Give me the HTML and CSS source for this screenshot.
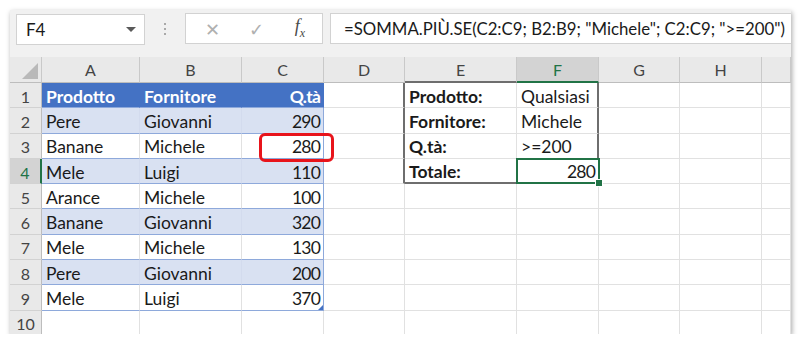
FILE: index.html
```html
<!DOCTYPE html>
<html lang="it">
<head>
    <meta charset="UTF-8">
    <meta name="viewport" content="width=device-width, initial-scale=1.0">
    <title>SOMMA.PIÙ.SE</title>
    <link rel="stylesheet" href="styles.css">
</head>
<body>
    <div class="frame">
        <div class="bar">
            <div class="namebox">
                <span>F4</span>
                <span class="caret"></span>
            </div>
            <div class="dots"><i></i><i></i><i></i></div>
            <div class="fxbox">
                <span class="btn x">&#x2715;</span>
                <span class="btn ok">&#x2713;</span>
                <span class="btn fx">f<sub>x</sub></span>
            </div>
            <div class="formula">=SOMMA.PIÙ.SE(C2:C9; B2:B9; "Michele"; C2:C9; "&gt;=200")</div>
        </div>

        <div class="sheet">
            <div class="row head">
                <div class="hc corner">
                    <svg width="16" height="16" viewBox="0 0 16 16"><polygon points="16,0 16,16 0,16" fill="#b9b9b9"/></svg>
                </div>
                <div class="hc">A</div>
                <div class="hc">B</div>
                <div class="hc">C</div>
                <div class="hc">D</div>
                <div class="hc box-t">E</div>
                <div class="hc on">F</div>
                <div class="hc">G</div>
                <div class="hc">H</div>
                <div class="hc"></div>
            </div>

            <div class="row">
                <div class="rh">1</div>
                <div class="c th">Prodotto</div>
                <div class="c th">Fornitore</div>
                <div class="c th num">Q.tà</div>
                <div class="c box-l"></div>
                <div class="c lbl">Prodotto:</div>
                <div class="c box-r">Qualsiasi</div>
                <div class="c"></div>
                <div class="c"></div>
                <div class="c"></div>
            </div>
            <div class="row">
                <div class="rh">2</div>
                <div class="c t band">Pere</div>
                <div class="c t band">Giovanni</div>
                <div class="c t band end num">290</div>
                <div class="c box-l"></div>
                <div class="c lbl">Fornitore:</div>
                <div class="c box-r">Michele</div>
                <div class="c"></div>
                <div class="c"></div>
                <div class="c"></div>
            </div>
            <div class="row">
                <div class="rh">3</div>
                <div class="c t">Banane</div>
                <div class="c t">Michele</div>
                <div class="c t end num hit">280</div>
                <div class="c box-l"></div>
                <div class="c lbl">Q.tà:</div>
                <div class="c box-r">&gt;=200</div>
                <div class="c"></div>
                <div class="c"></div>
                <div class="c"></div>
            </div>
            <div class="row">
                <div class="rh on">4</div>
                <div class="c t band">Mele</div>
                <div class="c t band">Luigi</div>
                <div class="c t band end num">110</div>
                <div class="c box-l"></div>
                <div class="c lbl box-b">Totale:</div>
                <div class="c num box-b sel">280</div>
                <div class="c"></div>
                <div class="c"></div>
                <div class="c"></div>
            </div>
            <div class="row">
                <div class="rh">5</div>
                <div class="c t">Arance</div>
                <div class="c t">Michele</div>
                <div class="c t end num">100</div>
                <div class="c"></div>
                <div class="c"></div>
                <div class="c"></div>
                <div class="c"></div>
                <div class="c"></div>
                <div class="c"></div>
            </div>
            <div class="row">
                <div class="rh">6</div>
                <div class="c t band">Banane</div>
                <div class="c t band">Giovanni</div>
                <div class="c t band end num">320</div>
                <div class="c"></div>
                <div class="c"></div>
                <div class="c"></div>
                <div class="c"></div>
                <div class="c"></div>
                <div class="c"></div>
            </div>
            <div class="row">
                <div class="rh">7</div>
                <div class="c t">Mele</div>
                <div class="c t">Michele</div>
                <div class="c t end num">130</div>
                <div class="c"></div>
                <div class="c"></div>
                <div class="c"></div>
                <div class="c"></div>
                <div class="c"></div>
                <div class="c"></div>
            </div>
            <div class="row">
                <div class="rh">8</div>
                <div class="c t band">Pere</div>
                <div class="c t band">Giovanni</div>
                <div class="c t band end num">200</div>
                <div class="c"></div>
                <div class="c"></div>
                <div class="c"></div>
                <div class="c"></div>
                <div class="c"></div>
                <div class="c"></div>
            </div>
            <div class="row">
                <div class="rh">9</div>
                <div class="c t">Mele</div>
                <div class="c t">Luigi</div>
                <div class="c t end num resize">370</div>
                <div class="c"></div>
                <div class="c"></div>
                <div class="c"></div>
                <div class="c"></div>
                <div class="c"></div>
                <div class="c"></div>
            </div>
            <div class="row">
                <div class="rh">10</div>
                <div class="c"></div>
                <div class="c"></div>
                <div class="c"></div>
                <div class="c"></div>
                <div class="c"></div>
                <div class="c"></div>
                <div class="c"></div>
                <div class="c"></div>
                <div class="c"></div>
            </div>
        </div>
    </div>
</body>
</html>
```

FILE: styles.css
```css
body {
    margin: 0;
    background-color: #fff;
    font-family: Lato, "Liberation Sans", sans-serif;
    color: #1a1a1a;
}
.frame {
    margin: 10px 0 0 10px;
    width: 781px;
    height: 324px;
    overflow: hidden;
    background-color: #fff;
    box-shadow: 1px 2px 5px rgba(0,0,0,0.35);
}

/* formula bar */
.bar {
    height: 47px;
    box-sizing: border-box;
    padding: 3px 0 0 6px;
    background-color: #f1f1f1;
    display: flex;
    align-items: flex-start;
}
.namebox {
    width: 129px;
    height: 31px;
    margin-top: 1px;
    box-sizing: border-box;
    background-color: #fff;
    border: 1px solid #d2d2d2;
    display: flex;
    align-items: center;
    justify-content: space-between;
    padding: 0 8px 0 9px;
    font-size: 17px;
}
.caret {
    width: 0;
    height: 0;
    border-left: 5px solid transparent;
    border-right: 5px solid transparent;
    border-top: 5px solid #5a5a5a;
}
.dots {
    width: 40px;
    height: 31px;
    display: flex;
    flex-direction: column;
    align-items: center;
    justify-content: center;
    gap: 3px;
}
.dots i {
    width: 2px;
    height: 2px;
    background-color: #a9a9a9;
}
.fxbox {
    width: 138px;
    height: 31px;
    box-sizing: border-box;
    background-color: #fff;
    border: 1px solid #d2d2d2;
    display: flex;
    align-items: center;
    padding-left: 4px;
}
.btn {
    width: 45px;
    text-align: center;
    color: #b0b0b0;
    font-size: 18px;
}
.btn.fx {
    color: #4a4a4a;
    font-family: "Liberation Serif", serif;
    font-style: italic;
    font-size: 18px;
}
.btn.fx sub {
    font-size: 12px;
}
.formula {
    flex: 1;
    height: 31px;
    margin-left: 7px;
    margin-right: -2px;
    box-sizing: border-box;
    background-color: #fff;
    border: 1px solid #d2d2d2;
    padding-left: 13px;
    display: flex;
    align-items: center;
    font-size: 16.8px;
    white-space: nowrap;
}

/* grid */
.row {
    display: grid;
    grid-template-columns: 32px 98px 102px 82px 81px 112px 82px 81px 82px 1fr;
    height: 25.3px;
}
.row.head {
    height: 26px;
}
.hc {
    background-color: #e9e9e9;
    border-right: 1px solid #c9c9c9;
    border-bottom: 1px solid #bdbdbd;
    display: flex;
    align-items: center;
    justify-content: center;
    font-size: 16px;
    color: #444;
}
.hc.corner {
    justify-content: flex-end;
    align-items: flex-end;
    padding: 0 3px 3px 0;
}
.hc.on {
    background-color: #d3d3d3;
    color: #217346;
    border-bottom: 2px solid #217346;
}
.hc.box-t {
    border-bottom: 2px solid #6e6e6e;
}
.rh {
    background-color: #e9e9e9;
    border-right: 1px solid #bdbdbd;
    border-bottom: 1px solid #d2d2d2;
    display: flex;
    align-items: center;
    justify-content: center;
    font-size: 16px;
    color: #444;
    padding-top: 2px;
}
.rh.on {
    background-color: #d3d3d3;
    color: #217346;
    border-right: 2px solid #217346;
}
.c {
    box-sizing: border-box;
    border-right: 1px solid #e1e1e1;
    border-bottom: 1px solid #e1e1e1;
    padding: 2px 3px 0 4px;
    display: flex;
    align-items: center;
    font-size: 17.5px;
    white-space: nowrap;
    min-width: 0;
}
.num {
    justify-content: flex-end;
    letter-spacing: -0.8px;
}
.th {
    background-color: #4472c4;
    border-color: #4472c4;
    border-bottom-color: #8ea9db;
    color: #fff;
    font-weight: bold;
}
.t {
    border-bottom-color: #8ea9db;
}
.band {
    background-color: #d9e1f2;
    border-right-color: #d3dbee;
}
.t.end {
    border-right-color: #8ea9db;
}
.lbl {
    font-weight: bold;
}
.box-l {
    border-right: 2px solid #6e6e6e;
}
.box-r {
    border-right: 2px solid #6e6e6e;
}
.box-b {
    border-bottom: 2px solid #6e6e6e;
}

/* overlays */
.hit {
    position: relative;
}
.hit::after {
    content: "";
    position: absolute;
    left: 17px;
    right: -11px;
    top: -1px;
    bottom: -4px;
    border: 3px solid #e8141b;
    border-radius: 6px;
}
.sel {
    position: relative;
}
.sel::after {
    content: "";
    position: absolute;
    left: -1px;
    right: -2px;
    top: -1px;
    bottom: -2px;
    border: 2px solid #217346;
}
.sel::before {
    content: "";
    position: absolute;
    right: -5px;
    bottom: -5px;
    width: 6px;
    height: 6px;
    background-color: #217346;
    border: 1px solid #fff;
    z-index: 1;
}
.resize {
    position: relative;
}
.resize::after {
    content: "";
    position: absolute;
    right: 0;
    bottom: 0;
    border-left: 5px solid transparent;
    border-bottom: 5px solid #4472c4;
}
```
